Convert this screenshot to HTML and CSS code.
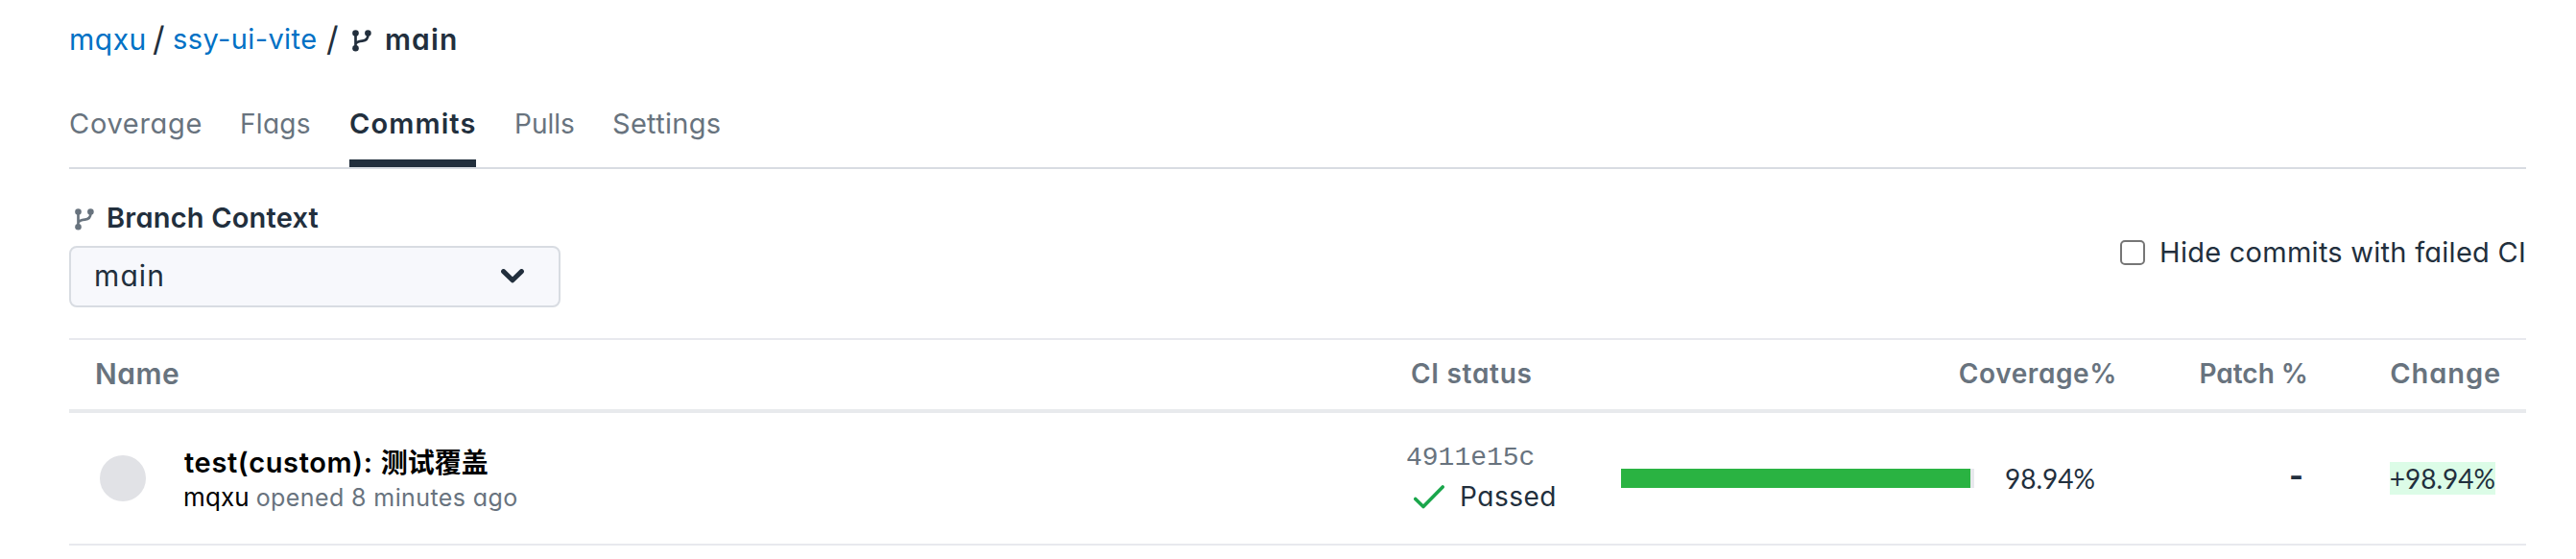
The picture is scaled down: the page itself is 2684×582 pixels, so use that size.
FILE: index.html
```html
<!DOCTYPE html>
<html lang="en">
<head>
<meta charset="utf-8">
<title>Commits - ssy-ui-vite</title>
<link rel="stylesheet" href="styles.css">
</head>
<body>
<svg class="defs" width="0" height="0" aria-hidden="true">
  <symbol id="branch" viewBox="0 0 20 23">
    <g fill="currentColor"><circle cx="3.5" cy="3.5" r="3.3"/><circle cx="3.5" cy="19.3" r="3.3"/><circle cx="16.4" cy="3.5" r="3.3"/></g>
    <path d="M3.5 3.5V19.3M16.4 3.5V5.5C16.4 9.5 14 11.2 10.5 11.6C7 12 5 12.2 3.5 14.5" fill="none" stroke="currentColor" stroke-width="2.7"/>
  </symbol>
</svg>
<div class="page">
  <nav class="crumbs">
    <a class="link owner">mqxu</a><span class="slash">/</span><a class="link repo">ssy-ui-vite</a><span class="slash">/</span>
    <svg class="icon crumb-icon"><use href="#branch"/></svg><span class="current">main</span>
  </nav>
  <nav class="tabs">
    <a class="tab coverage">Coverage</a>
    <a class="tab flags">Flags</a>
    <a class="tab commits">Commits</a>
    <a class="tab pulls">Pulls</a>
    <a class="tab settings">Settings</a>
  </nav>
  <section class="context">
    <div class="branch">
      <div class="branch-label"><svg class="icon label-icon"><use href="#branch"/></svg><span>Branch Context</span></div>
      <div class="select"><span>main</span>
        <svg class="chevron" viewBox="0 0 24 15"><path d="M2.6 2.6L12 11.8L21.4 2.6" fill="none" stroke="currentColor" stroke-width="5" stroke-linecap="round" stroke-linejoin="round"/></svg>
      </div>
    </div>
    <label class="hide"><span class="box"></span><span>Hide commits with failed CI</span></label>
  </section>
  <section class="table">
    <div class="row head">
      <div class="h-name">Name</div>
      <div class="h-ci">CI status</div>
      <div class="h-cov">Coverage%</div>
      <div class="h-patch">Patch %</div>
      <div class="h-change">Change</div>
    </div>
    <div class="row item">
      <div class="name">
        <span class="avatar"></span>
        <div class="commit">
          <div class="title">test(custom): <span class="cjk">测试覆盖</span></div>
          <div class="meta"><span class="author">mqxu</span><span class="when">opened 8 minutes ago</span></div>
        </div>
      </div>
      <div class="ci">
        <div class="sha">4911e15c</div>
        <div class="passed"><svg class="check" viewBox="0 0 32 25"><path d="M1.8 14.5L10 22.5L30.2 2" fill="none" stroke="currentColor" stroke-width="3.6" stroke-linecap="round" stroke-linejoin="round"/></svg><span>Passed</span></div>
      </div>
      <div class="cov"><div class="track"><div class="fill" style="width:98.94%"></div></div><span class="num">98.94%</span></div>
      <div class="patch"><span class="dash">-</span></div>
      <div class="change"><span class="delta">+98.94%</span></div>
    </div>
  </section>
</div>
</body>
</html>
```
FILE: styles.css
```css
* { box-sizing: border-box; }
body {
  margin: 0;
  background: #fff;
  color: #222f3d;
  font: 28px/40px Inter, "Liberation Sans", sans-serif;
  font-feature-settings: "cv11";
  white-space: nowrap;
}
.defs { display: block; }
.page { width: 2560px; margin-left: 72px; padding-top: 21px; }
.icon { display: block; width: 20px; height: 23px; flex: none; }

.crumbs { display: flex; height: 40px; }
.link { color: #0071c5; }
.owner { width: 87px; font-size: 30px; letter-spacing: .5px; }
.slash { width: 21px; font-size: 35px; line-height: 39px; }
.repo { width: 160px; font-size: 29px; letter-spacing: .4px; }
.crumb-icon { margin: 10px 14px 0 6px; }
.current { font-size: 30px; font-weight: 600; letter-spacing: 1.1px; }

.tabs { display: flex; gap: 40px; margin-top: 48px; border-bottom: 2px solid #d8dce2; color: #68737e; }
.tab { height: 65px; }
.coverage { width: 138px; font-size: 29px; letter-spacing: .7px; }
.flags { width: 74px; letter-spacing: .3px; }
.commits { width: 132px; font-size: 29px; letter-spacing: 1.1px; font-weight: 600; color: #222f3d; border-bottom: 8px solid #222f3d; }
.pulls { width: 62px; }
.settings { width: 114px; font-size: 29px; letter-spacing: .3px; }

.context { display: flex; justify-content: space-between; align-items: center; padding: 31px 0 32px; }
.branch-label { display: flex; font-size: 29px; font-weight: 600; letter-spacing: .2px; margin-bottom: 9px; }
.label-icon { margin: 10px 13px 0 6px; color: #68737e; }
.select {
  display: flex; align-items: center; justify-content: space-between;
  width: 512px; height: 64px; padding: 0 36px 2px 24px;
  border: 2px solid #d8dce2; border-radius: 8px; background: #f7f8fc; font-size: 30px; letter-spacing: 1.1px;
}
.chevron { width: 24px; height: 15px; }
.hide { display: flex; align-items: center; gap: 15px; padding-bottom: 1px; font-size: 29px; letter-spacing: .26px; }
.box { width: 26px; height: 26px; border: 2px solid #767676; border-radius: 5px; }

.table { border-top: 2px solid #e8e9ee; }
.row { display: grid; grid-template-columns: 1394px 223px 515px 200px 228px; }
.head { height: 76px; padding-top: 15px; border-bottom: 4px solid #e8eaed; color: #68737e; font-weight: 600; }
.h-name { padding-left: 27px; font-size: 30px; letter-spacing: .5px; }
.h-ci { padding-left: 4px; letter-spacing: .7px; }
.h-cov { margin-right: -2px; text-align: right; letter-spacing: .6px; }
.h-patch { margin-right: -1px; text-align: right; }
.h-change { text-align: right; padding-right: 26px; font-size: 29px; letter-spacing: .9px; }

.item { height: 138px; align-items: center; border-bottom: 2px solid #e8e9ee; }
.name { display: flex; align-items: center; padding-left: 32px; }
.avatar { width: 48px; height: 48px; border-radius: 50%; background: #e1e2e6; margin-right: 39px; }
.commit { padding-top: 1px; color: #000; }
.title { height: 38px; padding-left: 1px; line-height: 37px; font-size: 29px; font-weight: 600; letter-spacing: .65px; }
.cjk { font-family: "Noto Sans CJK SC", sans-serif; font-size: 28px; font-weight: 700; letter-spacing: 0; }
.meta { display: flex; gap: 7px; height: 36px; font-size: 25px; line-height: 36px; }
.author { font-size: 26px; letter-spacing: .1px; }
.when { color: #68737e; letter-spacing: .4px; }
.ci { margin-top: -2px; }
.sha { margin-left: -1px; font-family: "Liberation Mono", monospace; color: #68737e; }
.passed { display: flex; gap: 16px; letter-spacing: .5px; }
.check { width: 32px; height: 25px; margin: 8px 0 0 7px; color: #1aa64b; }
.cov { display: flex; align-items: center; }
.track { width: 368px; height: 20px; background: #e8e9ed; margin-right: 32px; }
.fill { height: 20px; background: #2ab342; }
.num, .delta { font-family: Lato, sans-serif; }
.patch { text-align: right; padding: 0 4px 4px 0; }
.dash { display: inline-block; font-size: 32px; font-weight: 700; }
.change { text-align: right; padding-right: 32px; }
.delta { background: #dcfce7; }
```
